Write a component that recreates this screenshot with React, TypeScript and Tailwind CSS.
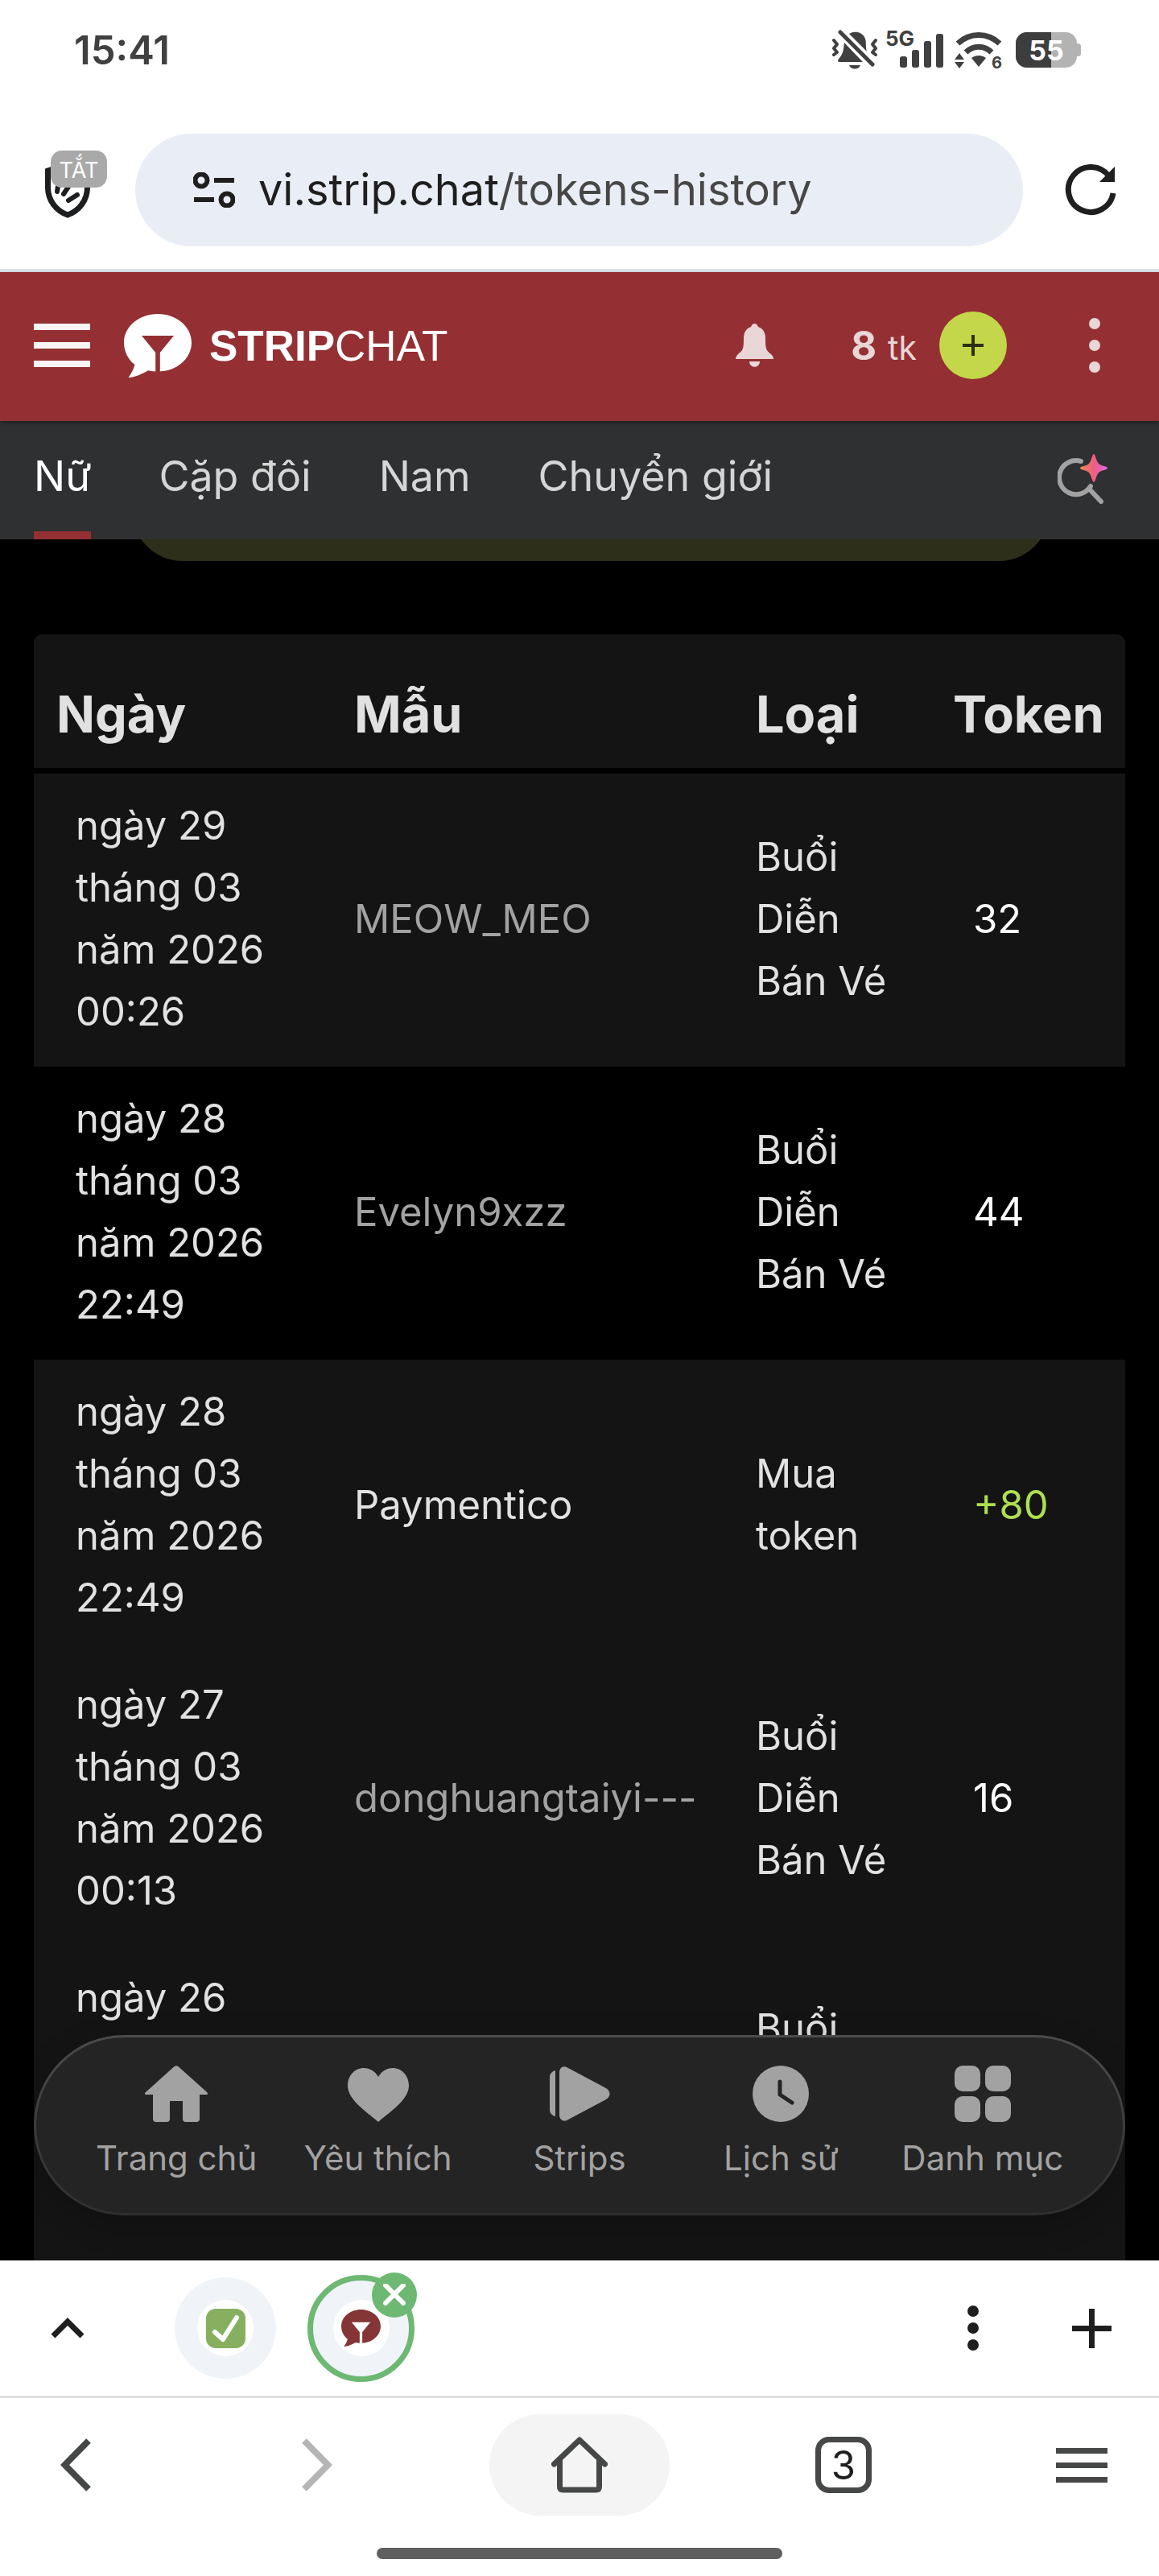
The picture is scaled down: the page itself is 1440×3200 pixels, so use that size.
import React from 'react';

type Kind = 'ticket' | 'purchase';

interface TokenEntry {
  date: string;
  model: string;
  kind: Kind;
  amount: number;
  isLink: boolean;
  striped: boolean;
}

const KIND_LABELS: Record<Kind, string> = {
  ticket: 'Buổi Diễn Bán Vé',
  purchase: 'Mua token',
};

const ENTRIES: TokenEntry[] = [
  { date: 'ngày 29 tháng 03 năm 2026 00:26', model: 'MEOW_MEO', kind: 'ticket', amount: 32, isLink: true, striped: true },
  { date: 'ngày 28 tháng 03 năm 2026 22:49', model: 'Evelyn9xzz', kind: 'ticket', amount: 44, isLink: true, striped: false },
  { date: 'ngày 28 tháng 03 năm 2026 22:49', model: 'Paymentico', kind: 'purchase', amount: 80, isLink: false, striped: true },
  { date: 'ngày 27 tháng 03 năm 2026 00:13', model: 'donghuangtaiyi---', kind: 'ticket', amount: 16, isLink: true, striped: true },
];

const TABS = ['Nữ', 'Cặp đôi', 'Nam', 'Chuyển giới'];

/** Speech bubble with the funnel cut out of it */
const BubbleLogo: React.FC<{ className: string; cut: string }> = ({ className, cut }) => (
  <svg viewBox="0 0 84 79" className={className} aria-hidden="true">
    <path
      fill="currentColor"
      d="M42 0C65 0 84 15.500 84 35.500S65.500 71.500 42 71.500C38 71.500 34 71 30 70.200C23 74 15 78.500 5.500 79C8.500 75 12 69 13.500 63C5 56.500 0 46.500 0 35.500C0 15.500 19 0 42 0Z"
    />
    <path className={cut} d="M22 27H62L44.800 48V73H39.200V48Z" />
  </svg>
);

const StatusBar: React.FC = () => (
  <div className="flex h-[124px] shrink-0 items-center justify-between pr-[97px] pl-[92px] text-[#404040]">
    <time className="text-[49px] leading-none font-semibold">15:41</time>
    <div className="flex items-center">
      {/* Ringer off */}
      <svg viewBox="0 0 56 50" className="h-[50px] w-14" fill="currentColor" aria-hidden="true">
        <path d="M21 5C27 1 36 2 40 9C43 14 41 21 43 27Z" />
        <path d="M15 16L38 40H9C6 40 7 37 9 35C14 29 14 24 15 16Z" />
        <path d="M21 44H35C33 50 23 50 21 44Z" />
        <path d="M11 2L52 42" stroke="#fff" strokeWidth="5" />
        <path d="M10 3L50 43" stroke="currentColor" strokeWidth="5" strokeLinecap="round" />
        <path
          d="M2 13L6 18L2 23L6 28L2 31M54 13L50 18L54 23L50 28L54 31"
          fill="none"
          stroke="currentColor"
          strokeWidth="4"
          strokeLinecap="round"
          strokeLinejoin="round"
        />
      </svg>
      {/* Mobile signal */}
      <div className="relative ml-[10px] h-12 w-[72px]">
        <span className="absolute top-0 left-0 text-[26px] leading-5 font-bold">5G</span>
        <svg viewBox="0 0 72 48" className="h-12 w-[72px]" fill="currentColor" aria-hidden="true">
          <rect x="18" y="32" width="9" height="14" rx="3" />
          <rect x="33" y="24" width="9" height="22" rx="3" />
          <rect x="48" y="13" width="9" height="33" rx="3" />
          <rect x="63" y="4" width="9" height="42" rx="3" />
        </svg>
      </div>
      {/* Wi-Fi 6 */}
      <svg viewBox="0 0 60 48" className="ml-[14px] h-12 w-[60px]" fill="currentColor" aria-hidden="true">
        <path d="M4 16C19 2 41 2 56 16" fill="none" stroke="currentColor" strokeWidth="7" />
        <path d="M14 27C23 18 37 18 46 27" fill="none" stroke="currentColor" strokeWidth="7" />
        <path d="M21 34C26 30 34 30 39 34L30 45Z" />
        <path d="M0 36L6 28L12 36ZM0 39H12L6 47Z" />
        <text x="46" y="47" fontSize="20" fontWeight="700">6</text>
      </svg>
      {/* Battery */}
      <div className="ml-4 flex items-center">
        <div className="relative h-11 w-[76px] overflow-hidden rounded-[14px] bg-[#b3b3b3]">
          <div className="h-full w-11 bg-[#3d3d3d]" />
          <span className="absolute inset-0 text-center text-[34px] leading-[45px] font-bold text-white">55</span>
        </div>
        <div className="h-4 w-[5px] rounded-r-sm bg-[#b3b3b3]" />
      </div>
    </div>
  </div>
);

const AddressBar: React.FC = () => (
  <div className="flex shrink-0 items-center border-b-4 border-[#dce1e7] pt-[42px] pr-[53px] pb-7 pl-14">
    <button type="button" aria-label="Chặn quảng cáo" className="relative h-[70px] w-14 shrink-0">
      <svg viewBox="0 0 56 70" className="h-[70px] w-14 text-[#1d1e1f]" aria-hidden="true">
        <path
          d="M3.500 11L28 3L52.500 11V32C52.500 48 42 61 28 66C14 61 3.500 48 3.500 32Z"
          fill="none"
          stroke="currentColor"
          strokeWidth="7"
        />
        <path
          d="M16 30L15 37M29 31L23 40M40 41L29 48"
          stroke="currentColor"
          strokeWidth="6"
          strokeLinecap="round"
        />
      </svg>
      <span className="absolute -top-[14px] left-[7px] h-[46px] w-[70px] rounded-[14px] bg-[#a9a9a9] text-[27px] leading-[50px] text-white">
        TẮT
      </span>
    </button>
    <button
      type="button"
      className="ml-14 flex h-[140px] flex-1 items-center rounded-full bg-[#e9eef6] pl-[72px] text-left"
    >
      <svg viewBox="0 0 52 44" className="h-11 w-[52px] shrink-0 text-[#1f1f1f]" aria-hidden="true">
        <g fill="none" stroke="currentColor" strokeWidth="6">
          <circle cx="10" cy="10" r="7.500" />
          <circle cx="42" cy="34" r="7.500" />
          <path d="M26 10H51M1 34H26" />
        </g>
      </svg>
      <span className="ml-[29px] text-[54px] leading-[64px] text-[#1f1f1f]">
        vi.strip.chat<span className="text-[#474747]">/tokens-history</span>
      </span>
    </button>
    <button type="button" aria-label="Tải lại" className="ml-[52px] shrink-0 text-[#1f1f1f]">
      <svg viewBox="0 0 64 64" className="size-16" aria-hidden="true">
        <path d="M55 15A28 28 0 1 0 60 36" fill="none" stroke="currentColor" strokeWidth="7" />
        <path d="M62 3V22H43Z" fill="currentColor" />
      </svg>
    </button>
  </div>
);

const SiteHeader: React.FC = () => (
  <header className="relative z-10 flex h-[185px] shrink-0 items-center bg-[#943033] pr-[73px] pb-[3px] pl-[42px] text-[#e9d6d6] shadow-[0_2px_4px_rgba(0,0,0,0.4)]">
    <button type="button" aria-label="Menu" className="flex w-[70px] flex-col gap-[15px]">
      <span className="h-2 bg-[#faf5f5]" />
      <span className="h-2 bg-[#faf5f5]" />
      <span className="h-2 bg-[#faf5f5]" />
    </button>
    <a href="#home" className="ml-[42px] flex items-center text-white">
      <BubbleLogo className="h-[79px] w-[84px]" cut="fill-[#943033]" />
      <span className="ml-[22px] font-['Liberation_Sans',Arial,sans-serif] text-[53px] leading-none font-bold">
        STRIP<span className="font-normal">CHAT</span>
      </span>
    </a>
    <button type="button" aria-label="Thông báo" className="ml-auto">
      <svg viewBox="0 0 47 54" className="h-[54px] w-[47px]" fill="currentColor" aria-hidden="true">
        <path d="M23.500 0C26 0 27 2 28 4C34 6 37 11 37 18C37 32 38 33 44 38C46 40 47 42 47 44H0C0 42 1 40 3 38C9 33 10 32 10 18C10 11 13 6 19 4C20 2 21 0 23.500 0Z" />
        <path d="M17 47H30C30 56 17 56 17 47Z" />
      </svg>
    </button>
    <p className="ml-24 flex items-baseline gap-[14px]">
      <span className="text-[49px] leading-none font-bold">8</span>
      <span className="text-[41px] leading-none">tk</span>
    </p>
    <button
      type="button"
      aria-label="Mua token"
      className="ml-7 flex size-[84px] items-center justify-center rounded-full bg-[#c4d64a] text-[#2b3010]"
    >
      <svg viewBox="0 0 26 26" className="size-[26px]" aria-hidden="true">
        <path d="M13 0V26M0 13H26" stroke="currentColor" strokeWidth="4" />
      </svg>
    </button>
    <button type="button" aria-label="Thêm" className="ml-[102px] flex flex-col gap-[13px]">
      <span className="size-[14px] rounded-full bg-current" />
      <span className="size-[14px] rounded-full bg-current" />
      <span className="size-[14px] rounded-full bg-current" />
    </button>
  </header>
);

const CategoryTabs: React.FC = () => (
  <nav className="flex h-[147px] shrink-0 items-stretch bg-[#2f3032] pr-16 pl-[42px]">
    <div className="flex gap-[84px] text-[52px]">
      {TABS.map((tab, index) => (
        <a
          key={tab}
          href={`#tab-${index}`}
          className={
            index === 0
              ? 'border-b-[10px] border-[#943033] leading-[137px] text-white'
              : 'leading-[137px] text-[#d5d5d5]'
          }
        >
          {tab}
        </a>
      ))}
    </div>
    <button type="button" aria-label="Tìm kiếm" className="ml-auto pb-1">
      <svg viewBox="0 0 62 62" className="size-[62px]" aria-hidden="true">
        <defs>
          <linearGradient id="spark" x1="0" y1="0" x2="1" y2="0">
            <stop offset="0" stopColor="#e8885a" />
            <stop offset="0.500" stopColor="#ee5f80" />
            <stop offset="1" stopColor="#e065e8" />
          </linearGradient>
        </defs>
        <path d="M29 9A21 21 0 1 0 41 40" fill="none" stroke="#a2a2a2" strokeWidth="6" strokeLinecap="round" />
        <path d="M39 43L54 59" stroke="#a2a2a2" strokeWidth="6" strokeLinecap="round" />
        <path
          fill="url(#spark)"
          d="M45 0C47 0 48 9 51 12C54 15 62 15 62 17.500S54 20 51 23S47 35 45 35S42 26 39 23S28 20 28 17.500S36 15 39 12S43 0 45 0Z"
        />
      </svg>
    </button>
  </nav>
);

const HistoryTable: React.FC = () => (
  <table className="w-full table-fixed border-separate border-spacing-0 text-left text-[#e1e1e1]">
    <colgroup>
      <col className="w-[370px]" />
      <col />
      <col className="w-[245px]" />
      <col className="w-[242px]" />
    </colgroup>
    <thead className="text-[63px] leading-[77px]">
      <tr className="[&>th]:border-b-[7px] [&>th]:border-black [&>th]:bg-[#141414] [&>th]:px-7 [&>th]:pt-[61px] [&>th]:pb-7 [&>th]:font-bold">
        <th className="rounded-tl-[10px]">Ngày</th>
        <th>Mẫu</th>
        <th>Loại</th>
        <th className="rounded-tr-[10px]">Token</th>
      </tr>
    </thead>
    <tbody className="text-[49px] leading-[77px] [&_td]:px-7 [&_td]:pt-[26px] [&_td]:pb-[30px] [&_td:first-child]:px-[52px] [&_td:last-child]:pl-[53px]">
      {ENTRIES.map((entry, index) => (
        <tr key={index} className={entry.striped ? 'bg-[#141414]' : 'bg-black'}>
          <td>{entry.date}</td>
          <td>
            {entry.isLink ? (
              <a href={`#${entry.model}`} className="text-[#a2a2a2]">{entry.model}</a>
            ) : (
              entry.model
            )}
          </td>
          <td>{KIND_LABELS[entry.kind]}</td>
          {entry.kind === 'purchase' ? (
            <td className="text-[#aedf4f]">+{entry.amount}</td>
          ) : (
            <td className="text-white">{entry.amount}</td>
          )}
        </tr>
      ))}
      <tr className="h-[400px] bg-[#141414] align-top">
        <td>ngày 26</td>
        <td />
        <td>
          <p className="mt-[38px]">Buổi</p>
        </td>
        <td />
      </tr>
    </tbody>
  </table>
);

const NAV_ITEMS: { label: string; icon: React.ReactNode }[] = [
  {
    label: 'Trang chủ',
    icon: (
      <path d="M36 1.500Q39 -1 42 1.500L77 33C79 35 78 36 76 36H68V66Q68 70 64 70H51Q47 70 47 66V44H31V66Q31 70 27 70H14Q10 70 10 66V36H2C0 36 -1 35 1 33Z" />
    ),
  },
  {
    label: 'Yêu thích',
    icon: <path d="M39 70C30 61 1 44 1 25C1 12 10 3 21 3C29 3 35 7 39 14C43 7 49 3 57 3C68 3 77 12 77 25C77 44 48 61 39 70Z" />,
  },
  {
    label: 'Strips',
    icon: (
      <>
        <path d="M9 6V63C5 62 2 59 2 55V14C2 10 5 7 9 6Z" />
        <path d="M14 9C14 2 19 -1 25 3L72 28C78 32 78 38 72 42L25 67C19 71 14 67 14 61Z" />
      </>
    ),
  },
  {
    label: 'Lịch sử',
    icon: (
      <>
        <circle cx="39" cy="35" r="35" />
        <path
          d="M38 20V36L53 46"
          fill="none"
          stroke="#242424"
          strokeWidth="5"
          strokeLinecap="round"
          strokeLinejoin="round"
        />
      </>
    ),
  },
  {
    label: 'Danh mục',
    icon: (
      <>
        <rect x="4" y="0" width="32" height="32" rx="10" />
        <rect x="42" y="0" width="32" height="32" rx="10" />
        <rect x="4" y="38" width="32" height="32" rx="10" />
        <rect x="42" y="38" width="32" height="32" rx="10" />
      </>
    ),
  },
];

/** Floating pill with the main sections, sits over the scrolled table */
const FloatingNav: React.FC = () => (
  <nav className="absolute inset-x-[42px] bottom-14 rounded-full bg-linear-to-b from-[#4b4b4b] to-[#2f2f2f] p-[3px] shadow-[0_12px_40px_rgba(0,0,0,0.2)]">
    <div className="flex h-[218px] rounded-full bg-[#242424] px-[49px] pt-[35px] text-[#a2a2a2]">
      {NAV_ITEMS.map(({ label, icon }) => (
        <a key={label} href={`#${label}`} className="flex flex-1 flex-col items-center">
          <svg viewBox="0 0 78 70" className="h-[70px] w-[78px]" fill="currentColor" aria-hidden="true">
            {icon}
          </svg>
          <span className="mt-[19px] text-[42px] leading-[52px] whitespace-nowrap">{label}</span>
        </a>
      ))}
    </div>
  </nav>
);

const BrowserTabs: React.FC = () => (
  <div className="flex h-[171px] shrink-0 items-center border-b-[3px] border-[#e0e0e0] pr-[59px] pl-[63px] text-[#1f1f1f]">
    <button type="button" aria-label="Mở rộng">
      <svg viewBox="0 0 42 26" className="h-[26px] w-[42px]" aria-hidden="true">
        <path d="M3 23L21 5L39 23" fill="none" stroke="currentColor" strokeWidth="7" />
      </svg>
    </button>
    <button
      type="button"
      aria-label="Thẻ 1"
      className="ml-28 flex size-[126px] items-center justify-center rounded-full bg-[#f0f4f9]"
    >
      <span className="flex size-[70px] items-center justify-center rounded-full bg-white">
        <svg viewBox="0 0 49 49" className="size-[49px]" aria-hidden="true">
          <rect width="49" height="49" rx="12" fill="#86b060" />
          <path
            d="M11 29L21 38L38 11"
            fill="none"
            stroke="#fff"
            strokeWidth="6"
            strokeLinecap="round"
            strokeLinejoin="round"
          />
        </svg>
      </span>
    </button>
    <div className="relative ml-[39px]">
      <button
        type="button"
        aria-label="Thẻ 2"
        className="flex size-[133px] items-center justify-center rounded-full border-[7px] border-[#6db872] bg-[#f0f4f9]"
      >
        <span className="flex size-[70px] items-center justify-center rounded-full bg-white text-[#853535]">
          <BubbleLogo className="h-[46px] w-[49px]" cut="fill-white" />
        </span>
      </button>
      <button
        type="button"
        aria-label="Đóng thẻ"
        className="absolute -top-[3px] -right-[3px] flex size-14 items-center justify-center rounded-full bg-[#6db872]"
      >
        <svg viewBox="0 0 28 28" className="size-7" aria-hidden="true">
          <path d="M3 2L25 24M25 2L3 24" stroke="#fff" strokeWidth="6" strokeLinecap="round" />
        </svg>
      </button>
    </div>
    <button type="button" aria-label="Tùy chọn" className="ml-auto flex flex-col gap-[7px]">
      <span className="size-[14px] rounded-full bg-current" />
      <span className="size-[14px] rounded-full bg-current" />
      <span className="size-[14px] rounded-full bg-current" />
    </button>
    <button type="button" aria-label="Thẻ mới" className="ml-[116px]">
      <svg viewBox="0 0 49 49" className="size-[49px]" aria-hidden="true">
        <path d="M24.500 0V49M0 24.500H49" stroke="currentColor" strokeWidth="7" />
      </svg>
    </button>
  </div>
);

const BrowserToolbar: React.FC = () => (
  <div className="shrink-0 pt-5 pb-[21px] text-[#464747]">
    <div className="grid grid-cols-[1fr_auto_1fr] items-center">
      <div className="flex items-center justify-between pr-[195px] pl-[75px]">
        <button type="button" aria-label="Quay lại">
          <svg viewBox="0 0 38 66" className="h-[66px] w-[38px]" aria-hidden="true">
            <path d="M35 3L5.500 33L35 63" fill="none" stroke="currentColor" strokeWidth="8" />
          </svg>
        </button>
        <button type="button" aria-label="Tiến" className="text-[#b5b5b5]">
          <svg viewBox="0 0 38 66" className="h-[66px] w-[38px]" aria-hidden="true">
            <path d="M3 3L32.500 33L3 63" fill="none" stroke="currentColor" strokeWidth="8" />
          </svg>
        </button>
      </div>
      <button
        type="button"
        aria-label="Trang chủ trình duyệt"
        className="flex h-[126px] w-56 items-center justify-center rounded-full bg-[#f4f4f4]"
      >
        <svg viewBox="0 0 70 70" className="size-[70px]" aria-hidden="true">
          <path
            d="M3.500 34L35 4L66.500 34M10.500 29V62Q10.500 66 14.500 66H55.500Q59.500 66 59.500 62V29"
            fill="none"
            stroke="currentColor"
            strokeWidth="7"
            strokeLinecap="round"
            strokeLinejoin="round"
          />
        </svg>
      </button>
      <div className="flex items-center justify-between pr-16 pl-[181px]">
        <button
          type="button"
          aria-label="Các thẻ"
          className="size-[70px] rounded-[17px] border-[7px] border-[#464747] text-center text-[49px] leading-[57px] text-[#1f1f1f]"
        >
          3
        </button>
        <button type="button" aria-label="Menu trình duyệt" className="flex w-16 flex-col gap-[11px]">
          <span className="h-[7px] bg-current" />
          <span className="h-[7px] bg-current" />
          <span className="h-[7px] bg-current" />
        </button>
      </div>
    </div>
    <div className="mx-auto mt-10 h-[14px] w-[504px] rounded-full bg-[#5f5f5f]" />
  </div>
);

const App: React.FC = () => {
  return (
    <div className="flex h-screen flex-col overflow-hidden bg-white font-['Inter',sans-serif]">
      <StatusBar />
      <AddressBar />
      <SiteHeader />
      <CategoryTabs />
      <main className="relative min-h-0 flex-1 overflow-hidden bg-black">
        {/* Lower edge of the button that is scrolled under the tabs */}
        <div className="flex h-[27px] items-end overflow-hidden pr-[136px] pl-[164px]">
          <div className="h-[126px] flex-1 shrink-0 rounded-full bg-[#2d2f1a]" />
        </div>
        <div className="mt-[91px] px-[42px]">
          <HistoryTable />
        </div>
        <FloatingNav />
      </main>
      <BrowserTabs />
      <BrowserToolbar />
    </div>
  );
};

export default App;
